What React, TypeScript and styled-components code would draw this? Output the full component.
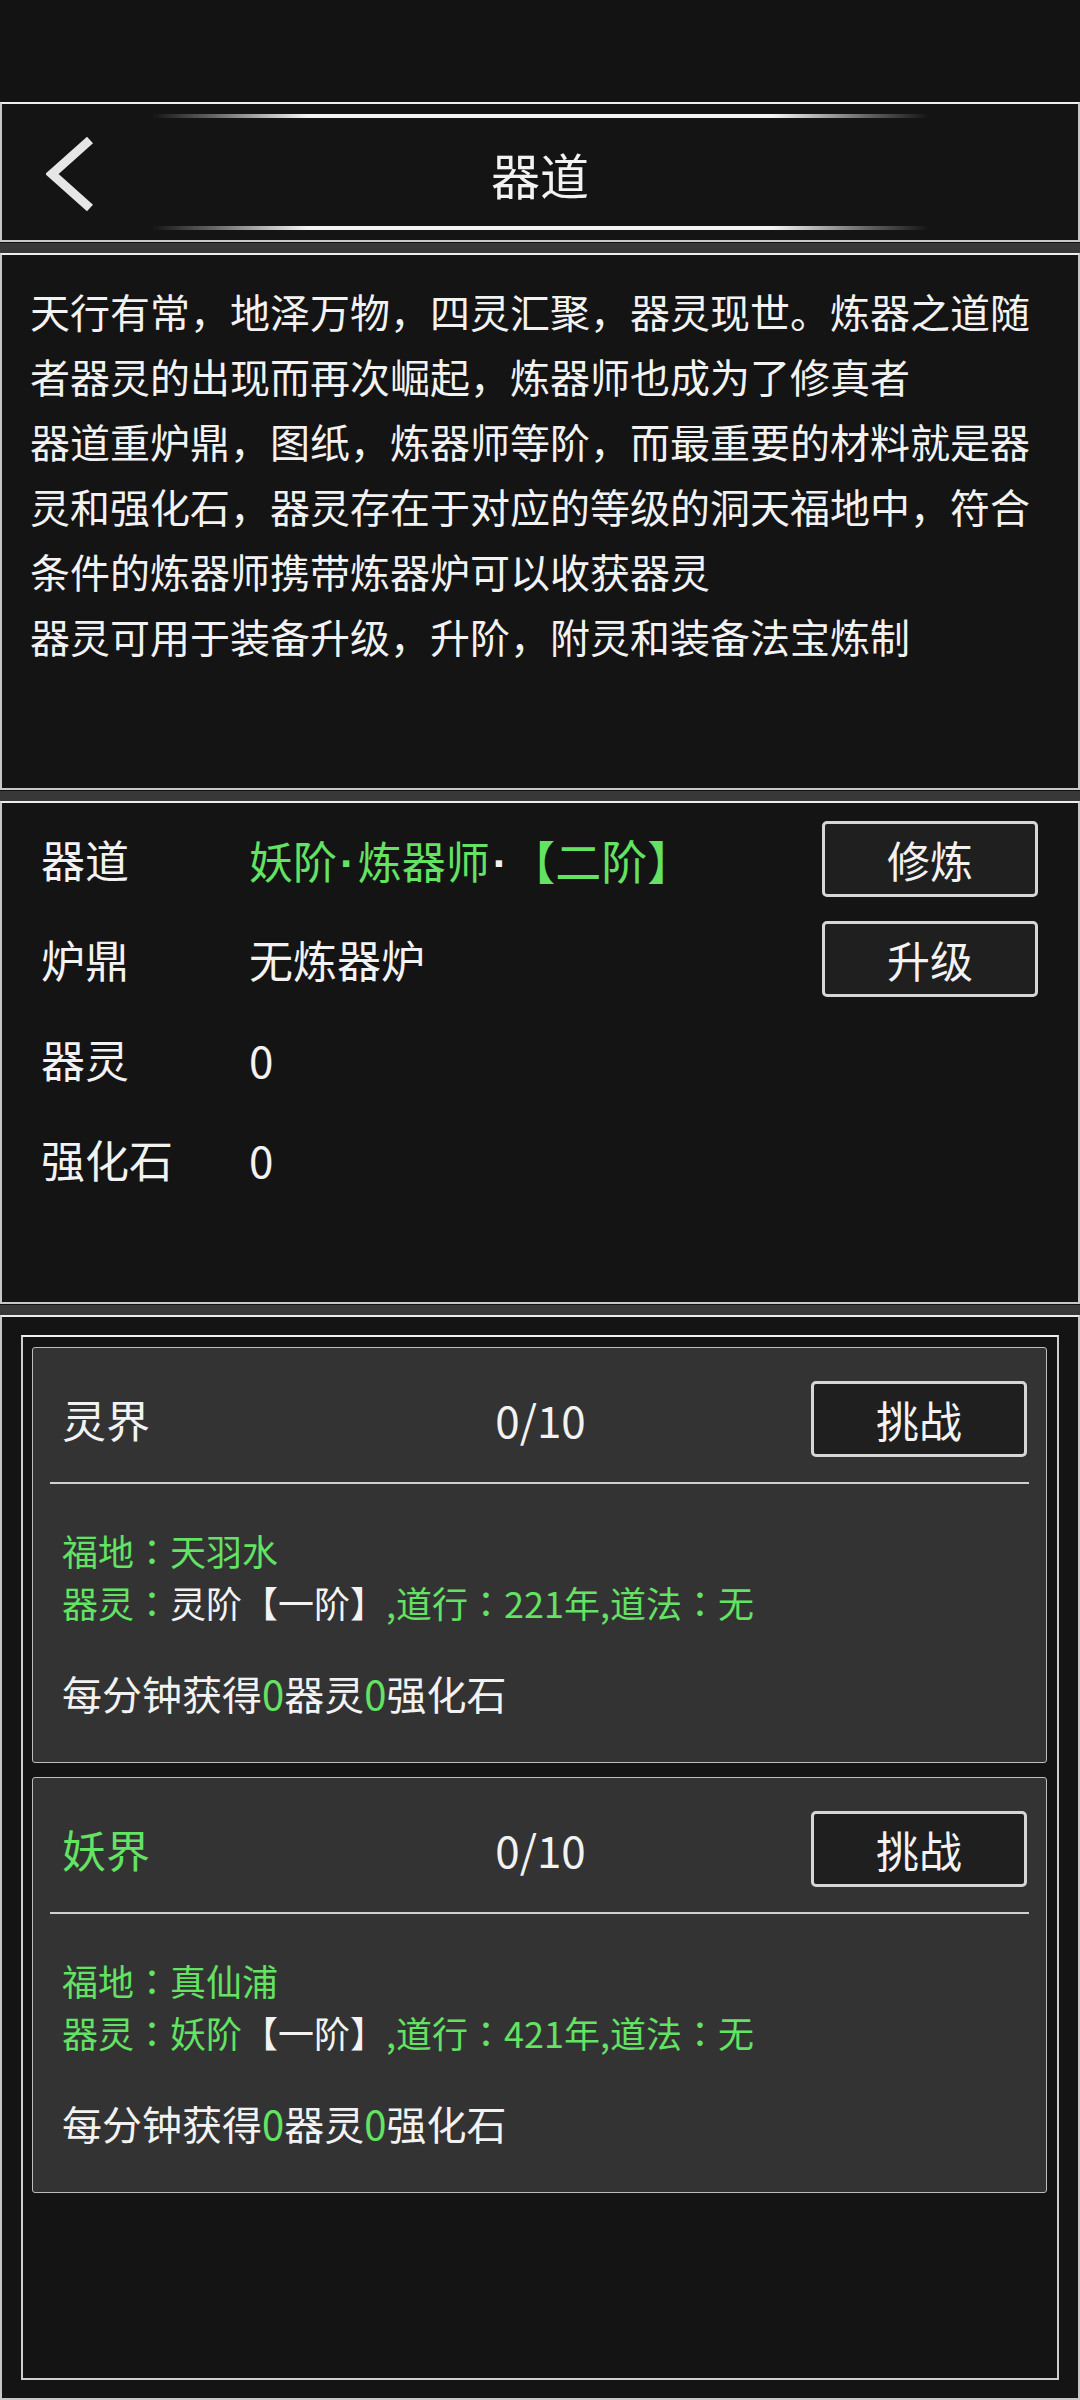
import styled, { createGlobalStyle } from "styled-components";

const GREEN = "#63e263";
const WHITE = "#f2f2f2";

const realms = [
  { name: "灵界", tier: "灵阶", color: WHITE, place: "天羽水", years: 221 },
  { name: "妖界", tier: "妖阶", color: GREEN, place: "真仙浦", years: 421 },
];

const BackIcon = () => (
  <svg width="48" height="76" viewBox="0 0 48 76">
    <polyline points="44,4 6,38 44,72" fill="none" stroke="#e6e6e6" strokeWidth="9" strokeLinejoin="miter" />
  </svg>
);

const App = () => {
  return (
    <Page>
      <GlobalStyle />
      <StatusSpace />
      <HeaderPanel>
        <Back><BackIcon /></Back>
        <Glow />
        <Title>器道</Title>
        <Glow />
      </HeaderPanel>
      <Strip />
      <IntroPanel>
        <p>天行有常，地泽万物，四灵汇聚，器灵现世。炼器之道随者器灵的出现而再次崛起，炼器师也成为了修真者</p>
        <p>器道重炉鼎，图纸，炼器师等阶，而最重要的材料就是器灵和强化石，器灵存在于对应的等级的洞天福地中，符合条件的炼器师携带炼器炉可以收获器灵</p>
        <p>器灵可用于装备升级，升阶，附灵和装备法宝炼制</p>
      </IntroPanel>
      <Strip />
      <StatsPanel>
        <StatRow>
          <Label>器道</Label>
          <Value>
            <Tint $color={GREEN}>妖阶<Dot>·</Dot>炼器师</Tint><Dot>·</Dot>
            <Rank>【二阶】</Rank>
          </Value>
          <Button>修炼</Button>
        </StatRow>
        <StatRow>
          <Label>炉鼎</Label>
          <Value>无炼器炉</Value>
          <Button>升级</Button>
        </StatRow>
        <StatRow>
          <Label>器灵</Label>
          <Value>0</Value>
        </StatRow>
        <StatRow>
          <Label>强化石</Label>
          <Value>0</Value>
        </StatRow>
      </StatsPanel>
      <Strip />
      <ListPanel>
        <Frame>
          {realms.map((r) => (
            <Card key={r.name}>
              <CardHead>
                <RealmName $color={r.color}>{r.name}</RealmName>
                <Count>0/10</Count>
                <Button>挑战</Button>
              </CardHead>
              <Divider />
              <CardBody>
                <Detail $color={GREEN}>福地<Colon>：</Colon>{r.place}</Detail>
                <Detail $color={GREEN}>
                  器灵<Colon>：</Colon><Tint $color={r.color}>{r.tier}</Tint>
                  <Tint $color={WHITE}>【一阶】</Tint>,道行<Colon>：</Colon>{r.years}年,道法<Colon>：</Colon>无
                </Detail>
                <Rate>
                  每分钟获得<Tint $color={GREEN}>0</Tint>器灵<Tint $color={GREEN}>0</Tint>强化石
                </Rate>
              </CardBody>
            </Card>
          ))}
        </Frame>
      </ListPanel>
    </Page>
  );
};
export default App;

const GlobalStyle = createGlobalStyle`
  html, body {
    margin: 0;
    padding: 0;
    background: #131313;
  }
  body {
    font-family: "Noto Sans CJK SC", "Noto Sans", sans-serif;
    color: ${WHITE};
  }
  * { box-sizing: border-box; }
`;

const Page = styled.div`
  width: 1080px;
  height: 2400px;
  display: flex;
  flex-direction: column;
  background: #131313;
  overflow: hidden;
`;

const StatusSpace = styled.div`
  height: 102px;
  flex-shrink: 0;
`;

const Panel = styled.div`
  border: 2px solid #c8c8c8;
  border-top-color: #eeeeee;
  background: #141414;
  flex-shrink: 0;
`;

const Strip = styled.div`
  height: 10px;
  margin-top: 1px;
  background: #383838;
  flex-shrink: 0;
`;

const HeaderPanel = styled(Panel)`
  height: 140px;
  display: grid;
  grid-template-columns: 149px 1fr 149px;
  grid-template-rows: 24px 1fr 24px;
  align-items: center;
`;

const Back = styled.div`
  grid-column: 1;
  grid-row: 1 / 4;
  padding-left: 44px;
  padding-top: 4px;
  display: flex;
  align-items: center;
`;

const Glow = styled.div`
  grid-column: 2;
  height: 4px;
  background: linear-gradient(
    90deg,
    rgba(255, 255, 255, 0) 0%,
    rgba(255, 255, 255, 0.35) 8%,
    #f4f4f4 20%,
    #f4f4f4 80%,
    rgba(255, 255, 255, 0.35) 92%,
    rgba(255, 255, 255, 0) 100%
  );
  filter: blur(0.7px);
`;

const Title = styled.div`
  grid-column: 2;
  text-align: center;
  font-size: 49px;
  line-height: 1;
  padding-top: 2px;
  color: ${WHITE};
`;

const IntroPanel = styled(Panel)`
  height: 537px;
  padding: 24px 26px 0 28px;
  font-size: 40px;
  line-height: 65px;
  p {
    margin: 0;
  }
`;

const StatsPanel = styled(Panel)`
  height: 503px;
  padding: 6px 40px 0 39px;
`;

const StatRow = styled.div`
  height: 100px;
  display: grid;
  grid-template-columns: 208px 1fr auto;
  align-items: center;
`;

const Label = styled.div`
  font-size: 44px;
`;

const Value = styled.div`
  font-size: 44px;
  color: ${WHITE};
`;

const Tint = styled.span<{ $color: string }>`
  color: ${(p) => p.$color};
`;

const Rank = styled.span`
  color: ${GREEN};
  margin-left: 22px;
  font-size: 46px;
`;

const Dot = styled.span`
  font-family: "Liberation Sans", sans-serif;
  font-weight: bold;
  padding: 0 3px;
`;

const Colon = styled.span`
  font-family: "Noto Sans CJK TC", "Noto Sans CJK SC", sans-serif;
`;

const Button = styled.div`
  width: 216px;
  height: 76px;
  justify-self: end;
  display: flex;
  align-items: center;
  justify-content: center;
  background: #1f1f1f;
  border: 3px solid #d6d6d6;
  border-radius: 5px;
  font-size: 43px;
  color: ${WHITE};
`;

const ListPanel = styled(Panel)`
  flex: 1;
  display: flex;
  padding: 18px 19px;
`;

const Frame = styled.div`
  flex: 1;
  border: 2px solid #cfcfcf;
  border-top-color: #f0f0f0;
  padding: 10px 10px 0 9px;
  display: flex;
  flex-direction: column;
  gap: 14px;
`;

const Card = styled.div`
  height: 416px;
  background: #333333;
  border: 1.5px solid #bdbdbd;
  border-radius: 3px;
`;

const CardHead = styled.div`
  height: 109px;
  padding: 32px 19px 0 29px;
  display: grid;
  grid-template-columns: 1fr auto 1fr;
  align-items: center;
`;

const RealmName = styled.div<{ $color: string }>`
  font-size: 44px;
  color: ${(p) => p.$color};
`;

const Count = styled.div`
  font-size: 44px;
  margin-right: 8px;
`;

const Divider = styled.div`
  height: 2px;
  margin: 25px 17px 0 17px;
  background: #d0d0d0;
`;

const CardBody = styled.div`
  padding: 40px 29px 0;
`;

const Detail = styled.div<{ $color: string }>`
  font-size: 36px;
  line-height: 52px;
  color: ${(p) => p.$color};
`;

const Rate = styled.div`
  margin-top: 39px;
  font-size: 40px;
  line-height: 52px;
  color: ${WHITE};
`;
